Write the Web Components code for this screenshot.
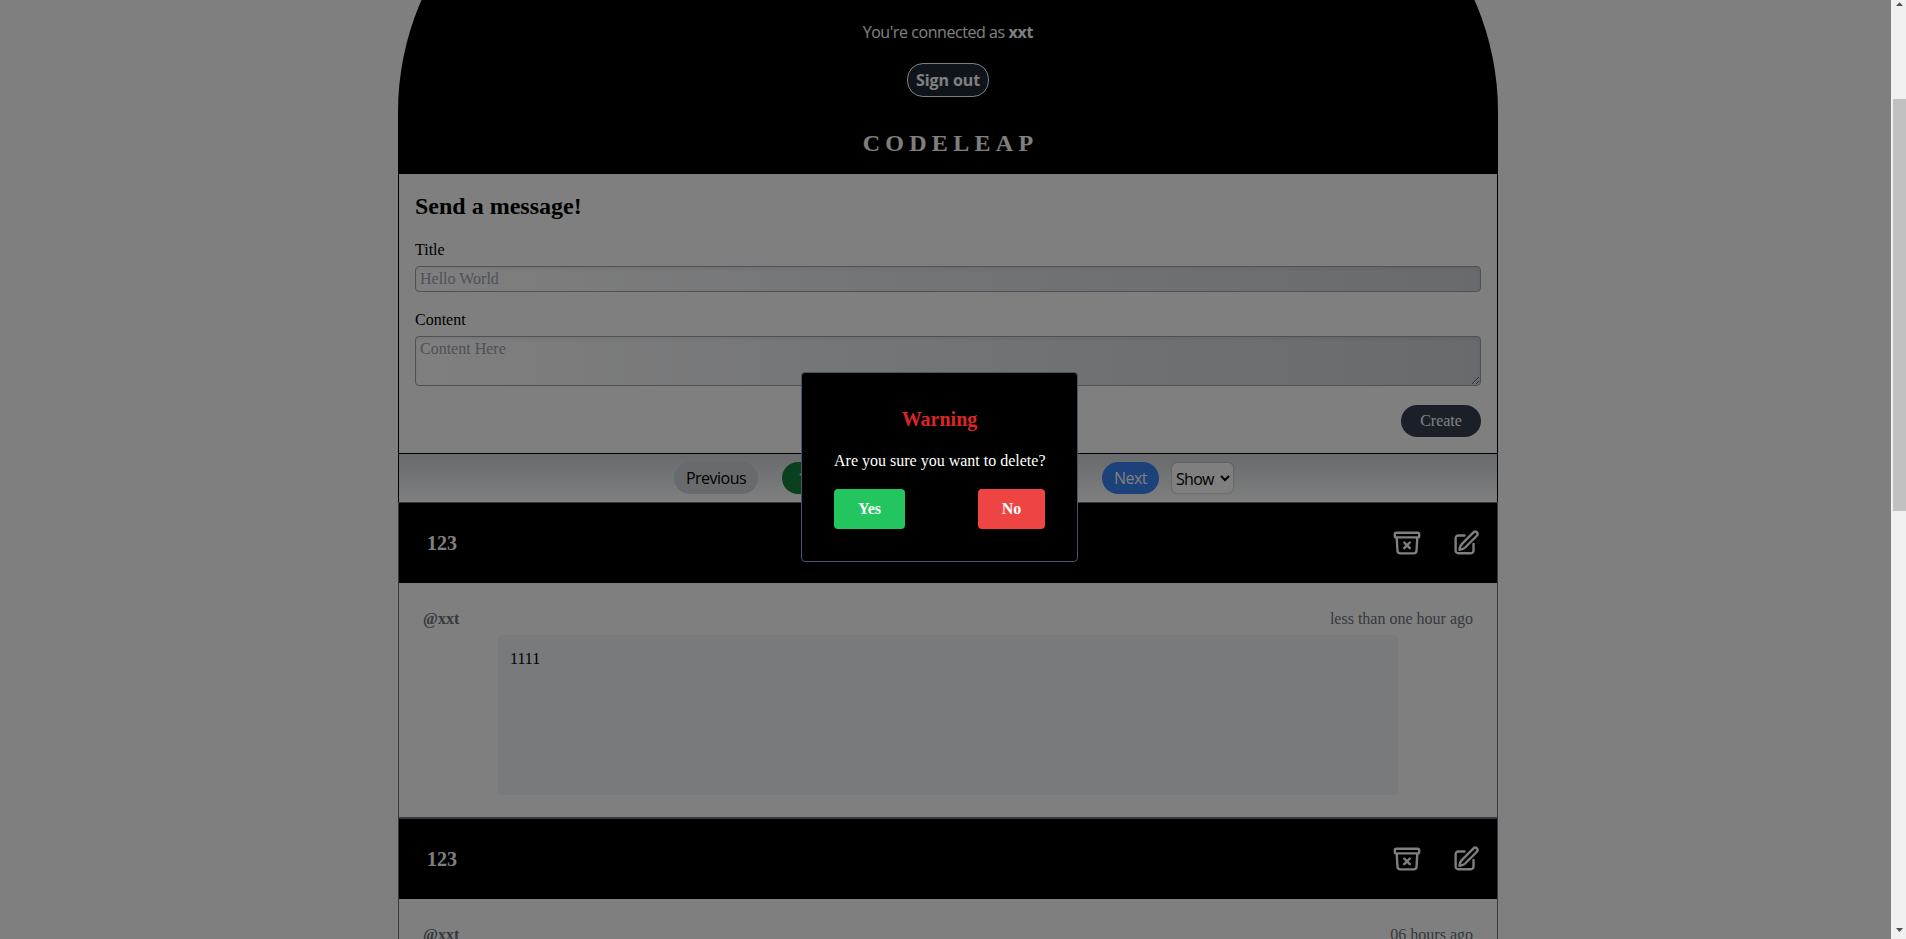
<!DOCTYPE html>
<html lang="en">
<head>
<meta charset="utf-8">
<title>CodeLeap</title>
<style>
html,body{margin:0;height:100%;overflow:hidden;background:#fff}
body{font:16px/24px "Liberation Serif","Times New Roman",serif;color:#000}
</style>
</head>
<body>
<app-shell></app-shell>
<script>
const define=(name,html,init)=>customElements.define(name,class extends HTMLElement{
  constructor(){super();this.attachShadow({mode:'open'}).innerHTML='<style>*{box-sizing:border-box}:host{box-sizing:border-box;display:block}</style>'+html;}
  connectedCallback(){if(init)init(this,this.shadowRoot);}
});

define('app-header',`<style>
:host{height:340px;margin-top:-166px;background:#000;color:#fff;border-radius:278px 278px 0 0;display:flex;flex-direction:column;align-items:center;justify-content:flex-end;padding-bottom:15px}
.who{font-family:"Open Sans",sans-serif;letter-spacing:-.43px;margin-bottom:19px;white-space:nowrap}
.who b{letter-spacing:-.2px}
button{font:bold 16px/24px "Open Sans",sans-serif;letter-spacing:-.1px;color:#fff;background:#1f2937;border:1px solid #fff;border-radius:16px;width:82px;height:34px;padding:4px 0;white-space:nowrap;margin-bottom:30px}
h1{font-size:24px;line-height:32px;margin:0 -5px 0 0;letter-spacing:5.3px}
</style><div class="who">You're connected as <b>xxt</b></div><button>Sign out</button><h1>CODELEAP</h1>`);

define('message-form',`<style>
:host{height:280px;border:1px solid #000;border-top:0;padding:16px;display:flex;flex-direction:column}
h2{font-size:24px;line-height:32px;margin:0 0 16px}
label{display:block;line-height:24px;margin-bottom:4px}
input,textarea{display:block;width:100%;font:16px/24px "Liberation Serif",serif;border:1px solid #9ca3af;border-radius:4px;padding:0 4px;background:linear-gradient(to right,#fff,#e5e7eb,#d1d5db);box-shadow:inset 0 2px 4px rgba(0,0,0,.06);outline:0}
input{height:26px;margin-bottom:16px}
textarea{height:50px;margin-bottom:19px;flex:none}
::placeholder{color:#9ca3af;opacity:1}
button{align-self:flex-end;width:80px;height:32px;border:0;border-radius:16px;background:#374151;color:#fff;font:16px/24px "Liberation Serif",serif}
</style><h2>Send a message!</h2><label>Title</label><input placeholder="Hello World"><label>Content</label><textarea placeholder="Content Here"></textarea><button>Create</button>`);

define('page-bar',`<style>
:host{height:48px;border:solid #000;border-width:0 1px;background:linear-gradient(#d1d5db,#fff);display:flex;align-items:center;padding-left:275px;font-family:"Open Sans",sans-serif}
button{height:32px;border:0;border-radius:16px;font:16px/24px "Open Sans",sans-serif;letter-spacing:-.5px;padding:0;flex:none}
.p{width:84px;background:#d1d5db}.n1{width:57px;margin-left:24px;background:#15803d;color:#fff;text-align:left;padding-left:16px}
.nx{width:57px;margin-left:263px;background:#3b82f6;color:#fff}
select{margin-left:13px;width:61px;height:30px;border:0;border-radius:5px;background:#fff;box-shadow:0 0 2px #0006;font:16px/24px "Open Sans",sans-serif;letter-spacing:-.7px;padding:2px 0 0;color:#000}
</style><button class="p">Previous</button><button class="n1">1</button><button class="nx">Next</button><select><option>Show</option></select>`);

define('icon-button',`<style>:host{width:30px;height:30px}svg{display:block;width:30px;height:30px;fill:none;stroke:#fff;stroke-width:1.9;stroke-linecap:round;stroke-linejoin:round}</style><span></span>`,(el,r)=>{
  const p={archive:'<path d="m20.25 7.5-.625 10.632a2.25 2.25 0 0 1-2.247 2.118H6.622a2.25 2.25 0 0 1-2.247-2.118L3.75 7.5m6 4.125 2.25 2.25m0 0 2.25 2.25M12 13.875l2.25-2.25M12 13.875l-2.25 2.25M3.375 7.5h17.25c.621 0 1.125-.504 1.125-1.125v-1.5c0-.621-.504-1.125-1.125-1.125H3.375c-.621 0-1.125.504-1.125 1.125v1.5c0 .621.504 1.125 1.125 1.125Z"/>',
  edit:'<path d="M10 6H5a2.1 2.1 0 0 0-2.1 2.1v10A2.1 2.1 0 0 0 5 20.2h10.1a2.1 2.1 0 0 0 2.1-2.1v-5.3M17.2 3.5a1.85 1.85 0 0 1 2.7 2.7L10.3 15.8Q9 17 5.9 17.5 6.4 14.4 7.6 13.1Z"/>'};
  r.querySelector('span').innerHTML='<svg viewBox="0 0 24 24">'+p[el.getAttribute('name')]+'</svg>';
});

define('post-card',`<style>
:host{height:316px;border:1px solid #6b7280}
header{height:80px;background:#000;color:#fff;display:flex;align-items:center;padding:0 15px 0 28px}
h3{margin:0 auto 0 0;font-size:20px;line-height:28px}
icon-button+icon-button{margin-left:30px}
.meta{display:flex;justify-content:space-between;padding:24px 24px 0;color:#6b7280;height:52px}
.body{width:900px;height:160px;margin:0 auto;background:#f3f4f6;border-radius:4px;padding:12px}
</style><header><h3><slot name="title"></slot></h3><icon-button name="archive"></icon-button><icon-button name="edit"></icon-button></header>
<div class="meta"><b><slot name="user"></slot></b><slot name="time"></slot></div><div class="body"><slot></slot></div>`);

define('confirm-dialog',`<style>
:host{position:absolute;left:801px;top:372px;width:277px;height:190px;background:#000;border:1px solid #475569;border-radius:4px;padding:32px;color:#fff;white-space:nowrap}
h2{font-size:20px;line-height:28px;color:#dc2626;margin:0 0 16px;text-align:center}
p{margin:0 0 16px;line-height:24px;}
div{display:flex;justify-content:space-between}
button{height:40px;border:0;border-radius:4px;color:#fff;font:bold 16px/24px "Liberation Serif",serif;width:71px;background:#22c55e}
button+button{width:67px;background:#ef4444}
</style><h2>Warning</h2><p>Are you sure you want to delete?</p><div><button>Yes</button><button>No</button></div>`);

define('scroll-rail',`<style>
:host{width:15px;height:939px;background:#f1f1f1;display:flex;flex-direction:column;align-items:flex-end;flex:none}
.t{width:13px;height:412px;background:#c1c1c1}
svg{display:block;width:13px;fill:#505050}
</style><svg height="99"><path d="M3 6h7L6.5 2.2z"/></svg><div class="t"></div><svg height="428"><path d="M3 417h7l-3.5 4z"/></svg>`);

define('app-shell',`<style>
:host{display:flex;width:1906px;height:939px;overflow:hidden;position:relative}
main{flex:1;height:939px;overflow:hidden;display:flow-root;padding-left:398px}
.col{width:1100px}
.shade{position:absolute;inset:0 15px 0 0;background:rgba(0,0,0,.5)}
</style><main><div class="col"><app-header></app-header><message-form></message-form><page-bar></page-bar>
<post-card><span slot="title">123</span><span slot="user">@xxt</span><span slot="time">less than one hour ago</span>1111</post-card>
<post-card><span slot="title">123</span><span slot="user">@xxt</span><span slot="time">06 hours ago</span></post-card>
</div></main><scroll-rail></scroll-rail><div class="shade"></div><confirm-dialog></confirm-dialog>`);
</script>
</body>
</html>
